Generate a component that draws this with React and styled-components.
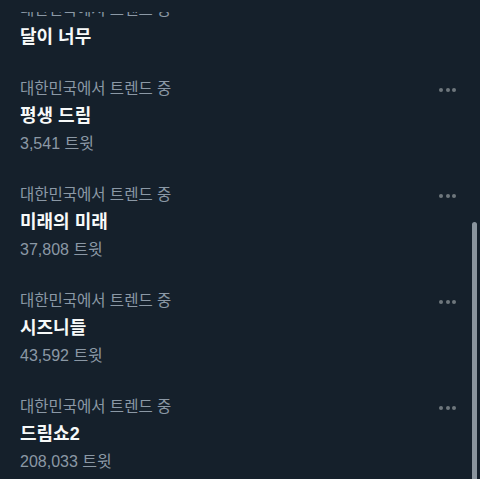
import styled, { createGlobalStyle } from "styled-components";

const GlobalStyle = createGlobalStyle`
    html, body {
        margin: 0;
        padding: 0;
        background: #15202b;
    }
    body {
        font-family: "Liberation Sans", "Noto Sans CJK KR", sans-serif;
    }
`;

const Page = styled.div`
    width: 480px;
    height: 479px;
    display: flex;
    flex-direction: column;
    background: #15202b;
    overflow: hidden;
`;

const TopBar = styled.div`
    height: 12px;
    flex: none;
    background: #15202b;
    position: relative;
    z-index: 1;
`;

const Body = styled.div`
    flex: 1;
    display: flex;
    min-height: 0;
`;

const List = styled.ul`
    flex: 1;
    margin: 0;
    padding: 0;
    list-style: none;
    overflow: hidden;
`;

const Inner = styled.div`
    margin-top: -26px;
`;

const Item = styled.li`
    display: flex;
    align-items: flex-start;
    padding: 14px 15px ${p => (p.$short ? "16px" : "17px")} 20px;
`;

const Texts = styled.div`
    flex: 1;
    display: flex;
    flex-direction: column;
`;

const Context = styled.span`
    font-size: 15.5px;
    line-height: 20px;
    color: #8b98a5;
`;

const Title = styled.span`
    margin-top: 5px;
    font-size: 18px;
    line-height: 24px;
    font-weight: 700;
    color: #f7f9f9;
`;

const Count = styled.span`
    margin-top: 6px;
    font-size: 16px;
    line-height: 20px;
    color: #8b98a5;
`;

const More = styled.div`
    display: flex;
    gap: 2.5px;
    margin-top: 9px;
`;

const Dot = styled.span`
    width: 4px;
    height: 4px;
    border-radius: 50%;
    background: #6e767d;
`;

const Track = styled.div`
    width: 9px;
    flex: none;
    padding-left: 1px;
    box-sizing: border-box;
`;

const Thumb = styled.div`
    margin-top: 210px;
    width: 5px;
    height: 300px;
    border-radius: 3px;
    background: #8a949d;
`;

const trends = [
    { title: "달이 너무" },
    { title: "평생 드림", count: "3,541" },
    { title: "미래의 미래", count: "37,808" },
    { title: "시즈니들", count: "43,592" },
    { title: "드림쇼2", count: "208,033" },
];

export default function App() {
    return (
        <>
            <GlobalStyle />
            <Page>
                <TopBar />
                <Body>
                    <List>
                        <Inner>
                            {trends.map(t => (
                                <Item key={t.title} $short={!t.count}>
                                    <Texts>
                                        <Context>대한민국에서 트렌드 중</Context>
                                        <Title>{t.title}</Title>
                                        {t.count && <Count>{t.count} 트윗</Count>}
                                    </Texts>
                                    {t.count && (
                                        <More>
                                            <Dot />
                                            <Dot />
                                            <Dot />
                                        </More>
                                    )}
                                </Item>
                            ))}
                        </Inner>
                    </List>
                    <Track>
                        <Thumb />
                    </Track>
                </Body>
            </Page>
        </>
    );
}
